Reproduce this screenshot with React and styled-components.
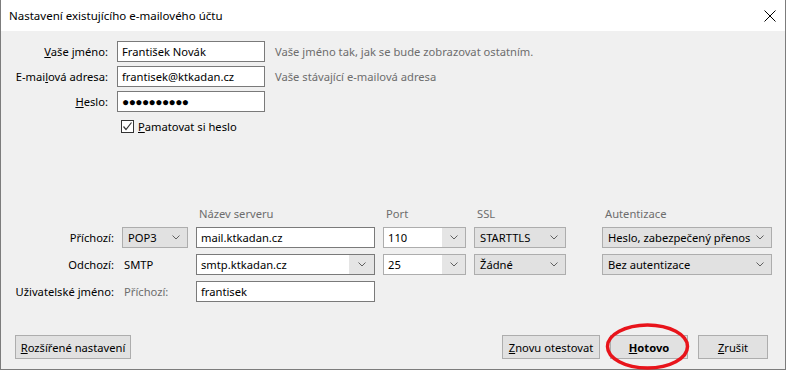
import React from "react";
import styled, { createGlobalStyle } from "styled-components";

const GlobalStyle = createGlobalStyle`
  html, body {
    margin: 0;
    padding: 0;
    background: #ffffff;
  }
  body {
    font-family: "Segoe UI", "Noto Sans", sans-serif;
    font-size: 11.2px;
  }
`;

const Window = styled.div`
  width: 786px;
  height: 370px;
  box-sizing: border-box;
  border: 1px solid #7c7c7c;
  border-top: none;
  display: flex;
  flex-direction: column;
  background: #f0f0f0;
  color: #000;
`;

const TitleBar = styled.div`
  height: 31px;
  flex: none;
  background: #fff;
  display: flex;
  align-items: center;
  justify-content: space-between;
  padding: 0 9px 0 8px;
`;

const Title = styled.span`
  font-size: 11.5px;
  color: #000;
`;

const CloseIcon = () => (
  <svg width="12" height="12" viewBox="0 0 12 12">
    <path d="M0.5 0.5 L11.5 11.5 M11.5 0.5 L0.5 11.5" stroke="#000" strokeWidth="1" />
  </svg>
);

const Body = styled.div`
  flex: 1;
  display: flex;
  flex-direction: column;
  padding: 10px 17px 10px 14px;
`;

const AccountGrid = styled.div`
  display: grid;
  grid-template-columns: 93px 148px 1fr;
  column-gap: 9px;
  row-gap: 4px;
  align-items: center;
`;

const Label = styled.label`
  text-align: right;
  white-space: nowrap;
  color: ${(p) => (p.$muted ? "#6d6d6d" : "#000")};
  justify-self: end;
`;

const TextInput = styled.div`
  height: 21px;
  box-sizing: border-box;
  border: 1px solid #7a7a7a;
  background: #fff;
  padding: 0 4px;
  display: flex;
  align-items: center;
  white-space: nowrap;
  overflow: hidden;
  font-size: ${(p) => (p.$dots ? "12px" : "inherit")};
  letter-spacing: ${(p) => (p.$dots ? "-0.6px" : "normal")};
`;

const Hint = styled.span`
  color: #6d6d6d;
  white-space: nowrap;
  margin-left: 1px;
`;

const CheckRow = styled.div`
  grid-column: 2 / 4;
  height: 13px;
  display: flex;
  align-items: center;
  gap: 4px;
  margin-top: 4px;
  padding-left: 4px;
`;

const CheckBox = styled.span`
  width: 13px;
  height: 13px;
  box-sizing: border-box;
  border: 1px solid #333;
  background: #fff;
  display: flex;
  align-items: center;
  justify-content: center;
`;

const BottomBlock = styled.div`
  margin-top: auto;
  display: flex;
  flex-direction: column;
`;

const ServerGrid = styled.div`
  display: grid;
  grid-template-columns: 99px 66px 179px 83px 120px 170px;
  grid-template-rows: 16px;
  column-gap: 8px;
  grid-auto-rows: 21px;
  row-gap: 6px;
  align-items: center;
`;

const ColHeader = styled.span`
  color: #6d6d6d;
  padding: 1px 0 0 3px;
  align-self: start;
  line-height: 16px;
`;

const Select = styled.div`
  height: 21px;
  width: ${(p) => p.$width || "auto"};
  box-sizing: border-box;
  border: 1px solid #adadad;
  background: #e1e1e1;
  display: flex;
  align-items: center;
  justify-content: space-between;
  padding: 0 7px 0 5px;
  white-space: nowrap;
`;

const Combo = styled.div`
  height: 21px;
  box-sizing: border-box;
  border: 1px solid ${(p) => (p.$dark ? "#7a7a7a" : "#adadad")};
  display: flex;
  align-items: stretch;
`;

const ComboField = styled.span`
  flex: 1;
  background: #fff;
  padding: 0 4px;
  display: flex;
  align-items: center;
`;

const ComboArrow = styled.span`
  width: ${(p) => p.$w || 23}px;
  background: #e5e5e5;
  display: flex;
  align-items: center;
  justify-content: center;
`;

const Plain = styled.span`
  color: ${(p) => (p.$muted ? "#6d6d6d" : "#000")};
  padding-left: 2px;
`;

const Chevron = () => (
  <svg width="8" height="5" viewBox="0 0 8 5">
    <polyline points="0.5,0.5 4,4 7.5,0.5" fill="none" stroke="#606060" strokeWidth="1" />
  </svg>
);

const ButtonRow = styled.div`
  display: flex;
  align-items: center;
  margin-top: 33px;
  gap: 10px;
`;

const Button = styled.div`
  height: 24px;
  box-sizing: border-box;
  width: ${(p) => p.$width}px;
  flex: none;
  border: 1px solid #adadad;
  background: #e1e1e1;
  display: flex;
  align-items: center;
  justify-content: center;
  font-weight: ${(p) => (p.$bold ? 700 : 400)};
  white-space: nowrap;
  margin-left: ${(p) => (p.$push ? "auto" : "0")};
`;

const Marked = styled.div`
  position: relative;
  display: flex;
`;

const RedRing = styled.svg`
  position: absolute;
  left: -6px;
  top: -12px;
  pointer-events: none;
`;

export default function App() {
  return (
    <>
      <GlobalStyle />
      <Window>
        <TitleBar>
          <Title>Nastavení existujícího e-mailového účtu</Title>
          <CloseIcon />
        </TitleBar>
        <Body>
          <AccountGrid>
            <Label><u>V</u>aše jméno:</Label>
            <TextInput>František Novák</TextInput>
            <Hint>Vaše jméno tak, jak se bude zobrazovat ostatním.</Hint>

            <Label>E-mai<u>l</u>ová adresa:</Label>
            <TextInput>frantisek@ktkadan.cz</TextInput>
            <Hint>Vaše stávající e-mailová adresa</Hint>

            <Label><u>H</u>eslo:</Label>
            <TextInput $dots>●●●●●●●●●●</TextInput>
            <span />

            <span />
            <CheckRow>
              <CheckBox>
                <svg width="11" height="11" viewBox="0 0 11 11">
                  <polyline points="1.5,5.5 4,8.5 9.5,1.5" fill="none" stroke="#333" strokeWidth="1.2" />
                </svg>
              </CheckBox>
              <span><u>P</u>amatovat si heslo</span>
            </CheckRow>
          </AccountGrid>

          <BottomBlock>
            <ServerGrid>
              <span />
              <span />
              <ColHeader>Název serveru</ColHeader>
              <ColHeader>Port</ColHeader>
              <ColHeader>SSL</ColHeader>
              <ColHeader>Autentizace</ColHeader>

              <Label>Příchozí:</Label>
              <Select>POP3<Chevron /></Select>
              <TextInput $dark>mail.ktkadan.cz</TextInput>
              <Combo>
                <ComboField>110</ComboField>
                <ComboArrow><Chevron /></ComboArrow>
              </Combo>
              <Select $width="92px">STARTTLS<Chevron /></Select>
              <Select>Heslo, zabezpečený přenos<Chevron /></Select>

              <Label>Odchozí:</Label>
              <Plain>SMTP</Plain>
              <Combo $dark>
                <ComboField>smtp.ktkadan.cz</ComboField>
                <ComboArrow $w={25}><Chevron /></ComboArrow>
              </Combo>
              <Combo>
                <ComboField>25</ComboField>
                <ComboArrow><Chevron /></ComboArrow>
              </Combo>
              <Select $width="92px">Žádné<Chevron /></Select>
              <Select>Bez autentizace<Chevron /></Select>

              <Label>Uživatelské jméno:</Label>
              <Plain $muted>Příchozí:</Plain>
              <TextInput>frantisek</TextInput>
            </ServerGrid>

            <ButtonRow>
              <Button $width={116}><u>R</u>ozšířené nastavení</Button>
              <Button $width={98} $push><u>Z</u>novu otestovat</Button>
              <Marked>
                <Button $width={78} $bold><u>H</u>otovo</Button>
                <RedRing width="90" height="50" viewBox="0 0 90 50">
                  <ellipse cx="43.5" cy="23.5" rx="40" ry="21.5" fill="none" stroke="#e8141b" strokeWidth="3.5" />
                </RedRing>
              </Marked>
              <Button $width={70}><u>Z</u>rušit</Button>
            </ButtonRow>
          </BottomBlock>
        </Body>
      </Window>
    </>
  );
}
